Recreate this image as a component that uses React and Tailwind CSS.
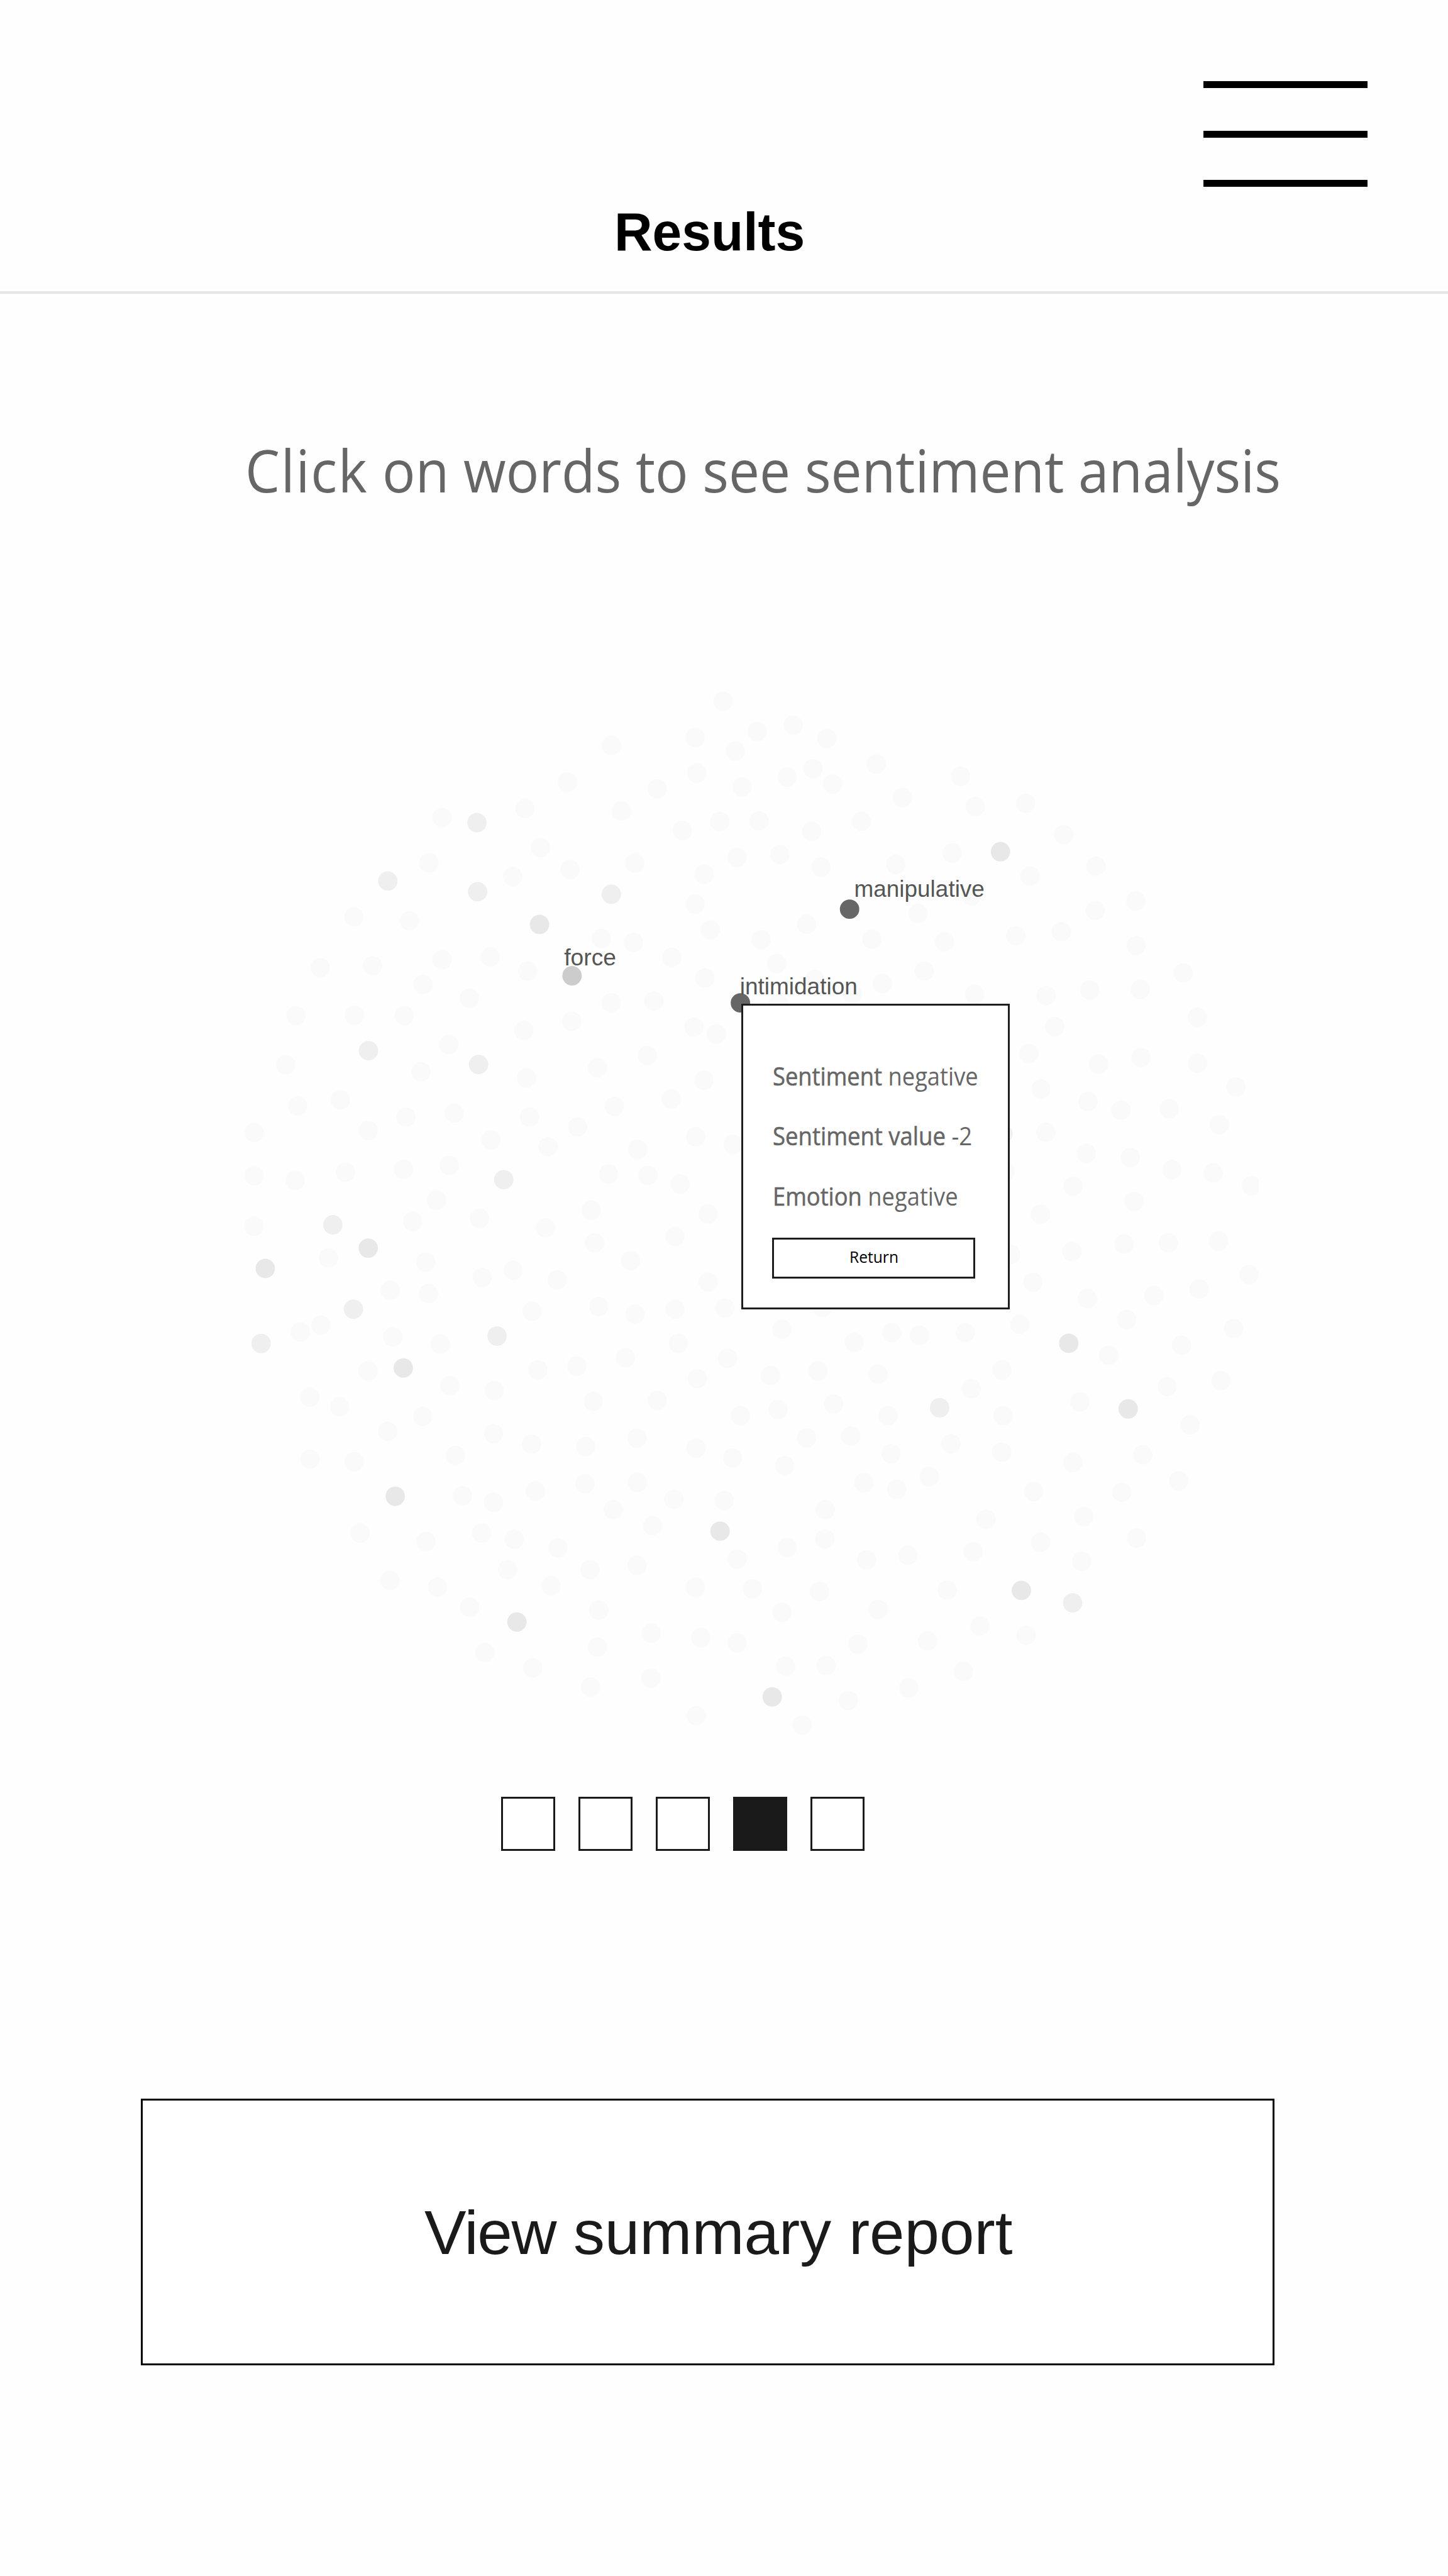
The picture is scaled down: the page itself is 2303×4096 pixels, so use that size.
import { useLayoutEffect, useRef, useState } from "react";

const FILLS = { light: "#fafafa", mid: "#efefef", dark: "#e8e8e8" };

// Word cloud dots, grouped by sector. Each sector has an origin, a scale and
// flat lists of x, y pairs in its own units.
const SECTORS = [
  {
    x: 600, y: 1780, sx: 0.6122, sy: 0.6122,
    light: [1478,480, 935,633, 1294,594, 1361,763, 878,829, 1241,888, 1489,858, 553,1063, 794,1080, 407,1283, 634,1274, 935,1249, 1144,1236, 1305,1298, 853,1356, 1053,1415, 302,1491, 555,1489, 771,1491, 1496,1515],
    mid: [1086,655, 700,908, 1089,954],
    dark: [1357,1096],
  },
  {
    x: 1500, y: 1780, sx: 0.6122, sy: 0.6122,
    light: [682,129, 198,320, 561,286, 830,261, 986,233, 1132,290, 735,345, 569,441, 764,500, 960,458, 1071,421, 1156,488, 1346,401, 1459,547, 397,509, 241,605, 505,689, 668,650, 838,648, 1066,693, 1281,649, 299,830, 743,806, 928,793, 1106,847, 1430,836, 600,879, 561,1008, 627,1119, 155,1157, 294,1174, 460,1238, 846,1162, 1044,1095, 1327,1160, 914,1266, 1078,1333, 1372,1352, 603,1328, 922,1440, 1242,1399, 198,1435, 382,1427],
    mid: [198,965],
    dark: [],
  },
  {
    x: 2400, y: 1780, sx: 0.6378, sy: 0.6122,
    light: [231,454, 292,585, 502,571, 660,707, 196,787, 520,887, 794,844, 276,973, 54,1048, 791,1035, 960,994, 164,1171, 460,1145, 650,1127, 961,1187, 80,1298, 289,1399, 587,1404, 768,1380, 978,1378, 1157,1306, 1216,1498],
    mid: [],
    dark: [397,781],
  },
  {
    x: 600, y: 2700, sx: 0.6122, sy: 0.6122,
    light: [1289,52, 258,201, 843,231, 964,113, 1301,258, 309,379, 494,353, 121,494, 778,428, 987,410, 615,486, 1314,427, 1147,527, 1522,470, 1394,555, 121,682, 298,702, 516,666, 768,654, 966,637, 911,787, 808,880, 1097,866, 1383,907, 120,900, 443,1038, 864,1056, 1109,1122, 1243,1091, 1434,1132, 711,1177, 876,1192, 1325,1269, 321,1358, 410,1328, 722,1380, 927,1410, 614,1527, 1350,1522, 1519,1506],
    mid: [616,140, 1093,200, 1202,698, 462,894, 551,1259, 1173,1376, 151,1408],
    dark: [615,995, 169,1083, 767,1514],
  },
  {
    x: 1500, y: 2600, sx: 0.7972, sy: 0.6122,
    light: [427,201, 501,231, 272,324, 106,377, 460,431, 351,512, 162,544, 433,676, 558,709, 240,731, 143,838, 274,843, 381,880, 85,994, 474,1010, 364,1108, 96,1135, 216,1213, 474,1305, 110,1411, 231,1444, 364,1423, 530,1418, 854,1415],
    mid: [],
    dark: [],
  },
  {
    x: 2600, y: 2700, sx: 0.5102, sy: 0.6122,
    light: [386,36, 253,152, 614,198, 835,170, 1128,195, 315,306, 559,360, 730,398, 981,391, 1328,297, 1241,461, 340,493, 550,584, 779,603, 995,655, 1210,669, 1409,725, 481,727, 127,663, 799,793, 312,848, 157,1022, 476,1010, 746,977, 977,972, 1238,965, 1396,1109, 273,1143, 556,1213, 901,1200, 1137,1172, 760,1304, 1316,1343, 205,1325, 666,1459, 1046,1416],
    mid: [117,500],
    dark: [459,1407],
  },
  {
    x: 600, y: 3600, sx: 0.6122, sy: 0.6696,
    light: [362,156, 491,194, 968,110, 1161,129, 851,232, 699,291, 362,401, 554,412, 1158,300, 1322,342, 993,386, 1023,546, 1157,572, 1339,527, 580,694, 865,727, 1106,694, 1247,718, 1437,752, 1218,839, 709,881, 915,908, 1407,902, 1054,987, 1120,1166, 1328,1228],
    mid: [],
    dark: [732,548, 1259,1046],
  },
  {
    x: 1500, y: 3500, sx: 0.6122, sy: 0.7334,
    light: [488,84, 259,136, 937,33, 1250,80, 1412,45, 701,138, 570,211, 887,200, 1093,184, 1353,195, 120,294, 397,290, 757,345, 920,323, 1161,303, 1397,345, 87,457, 309,427, 565,463, 723,498, 1044,426, 1235,419, 949,526, 1410,483, 84,591, 311,587, 468,648, 206,685, 377,743, 687,652, 1292,588, 1434,612, 1125,685, 1123,791, 960,822, 743,864, 1304,867, 106,902, 309,886, 562,966, 809,971, 1100,981, 144,1049, 937,1056, 1353,1046, 371,1132, 138,1182, 585,1148, 743,1167, 1266,1171, 953,1251, 1128,1249, 108,1326, 369,1295, 1224,1375, 566,1430, 1025,1464],
    mid: [],
    dark: [669,763, 895,1362],
  },
  {
    x: 2400, y: 3500, sx: 0.6378, sy: 0.7334,
    light: [60,55, 251,45, 403,180, 276,248, 407,345, 727,296, 1090,240, 1314,219, 1185,379, 191,446, 402,477, 698,515, 989,487, 101,566, 1138,581, 535,620, 901,622, 337,719, 743,710, 564,803, 283,837, 963,788, 12,850, 735,872, 176,976, 312,1106, 94,1159, 504,1140, 243,1270, 16,1329],
    mid: [144,317, 697,1022],
    dark: [928,321, 484,977],
  },
];

const DOTS = SECTORS.flatMap((s) =>
  ["light", "mid", "dark"].flatMap((tone) => {
    const out = [];
    for (let i = 0; i < s[tone].length; i += 2) {
      out.push({
        cx: s.x + s[tone][i] * s.sx,
        cy: s.y + s[tone][i + 1] * s.sy,
        fill: FILLS[tone],
      });
    }
    return out;
  })
);

const WORDS = [
  { word: "force", cx: 1517, cy: 2587, fill: "#cccccc", x: 1496, y: 2560, w: 138 },
  { word: "manipulative", cx: 2253, cy: 2410.5, fill: "#666666", x: 2265, y: 2378, w: 346 },
  { word: "intimidation", cx: 1963.5, cy: 2659, fill: "#666666", x: 1962, y: 2636.5, w: 312 },
];

// Squeezes or stretches one line of text to a given width.
function FitText({ width, className = "", children }) {
  const ref = useRef(null);
  const [scale, setScale] = useState(1);
  useLayoutEffect(() => {
    const fit = () => setScale(width / ref.current.offsetWidth);
    fit();
    document.fonts?.ready.then(() => ref.current && fit());
  }, [width]);
  return (
    <div className={className} style={{ width }}>
      <span
        ref={ref}
        className="inline-block origin-left whitespace-nowrap"
        style={{ transform: `scaleX(${scale})` }}
      >
        {children}
      </span>
    </div>
  );
}

function Header() {
  return (
    <header className="flex h-[467px] items-start border-b-4 border-[#e6e6e6]">
      <h1 className="mt-[324px] ml-[977px] w-[310px]">
        <FitText width={303} className="text-[84.5px] leading-[90px] font-bold text-black">
          Results
        </FitText>
      </h1>
      <button aria-label="Menu" className="mt-[129px] mr-[128px] ml-auto flex w-[261px] flex-col gap-[67.5px]">
        <span className="h-[11px] bg-black" />
        <span className="h-[11px] bg-black" />
        <span className="h-[11px] bg-black" />
      </button>
    </header>
  );
}

function SentimentDialog() {
  return (
    <div
      role="dialog"
      className="absolute top-[516px] left-[1179px] h-[486px] w-[427px] border-[3px] border-[#1e1e1e] bg-white pt-[64px] pl-[47px] font-['Open_Sans','Noto_Sans',sans-serif] text-[41px] leading-[95.3px] text-[#666666]"
    >
      <FitText width={327}>
        <span className="[-webkit-text-stroke:0.6px_#666666]">Sentiment</span> negative
      </FitText>
      <FitText width={317}>
        <span className="[-webkit-text-stroke:0.6px_#666666]">Sentiment value</span> -2
      </FitText>
      <FitText width={295}>
        <span className="[-webkit-text-stroke:0.6px_#666666]">Emotion</span> negative
      </FitText>
      <button className="mt-[19px] -ml-px flex h-[65px] w-[323px] items-center justify-center border-[3px] border-[#1e1e1e] pb-[4px] text-[26.2px] leading-[40px] text-black">
        <FitText width={78}>Return</FitText>
      </button>
    </div>
  );
}

function WordCloud() {
  return (
    <section className="relative mt-[283px] h-[1700px] w-full">
      <svg className="block h-full w-full" viewBox="0 1800.78 3840 2834.6" preserveAspectRatio="none">
        <defs>
          <clipPath id="cloud">
            <rect x="600" y="1780" width="2738" height="2900" />
          </clipPath>
        </defs>
        <g clipPath="url(#cloud)">
          {DOTS.map((d, i) => (
            <circle key={i} cx={d.cx} cy={d.cy} r="25.7" fill={d.fill} />
          ))}
        </g>
        {WORDS.map((w) => (
          <g key={w.word}>
            <circle cx={w.cx} cy={w.cy} r="25.7" fill={w.fill} />
            <text x={w.x} y={w.y} fontSize="61.5" textLength={w.w} lengthAdjust="spacingAndGlyphs" fill="#555555">
              {w.word}
            </text>
          </g>
        ))}
      </svg>
      <SentimentDialog />
    </section>
  );
}

export default function App() {
  return (
    <div className="flex h-[4096px] w-[2303px] flex-col overflow-hidden bg-[#fefefe] font-['Liberation_Sans',Arial,sans-serif]">
      <Header />
      <main className="flex flex-col">
        <FitText
          width={1647}
          className="mt-[230px] ml-[390px] font-['Open_Sans','Noto_Sans',sans-serif] text-[94px] leading-[100px] text-[#666666]"
        >
          <span className="tracking-[1.8px]">Click</span> on words to see sentiment analysis
        </FitText>
        <WordCloud />
        <nav className="mt-[77px] ml-[797px] flex gap-[36.9px]">
          {[0, 1, 2, 3, 4].map((i) => (
            <button
              key={i}
              aria-label={`Page ${i + 1}`}
              className={`h-[86px] w-[86px] border-[3px] border-[#1a1a1a] ${i === 3 ? "bg-[#1a1a1a]" : "bg-white"}`}
            />
          ))}
        </nav>
        <button className="mt-[394px] ml-[224px] flex h-[424px] w-[1803px] items-center justify-center border-[3px] border-black bg-white pt-[2px] pl-[22px]">
          <FitText width={936} className="text-[98.5px] leading-[110px] text-[#1a1a1a]">
            <span className="tracking-[-1.3px]">View</span> summary report
          </FitText>
        </button>
      </main>
    </div>
  );
}
